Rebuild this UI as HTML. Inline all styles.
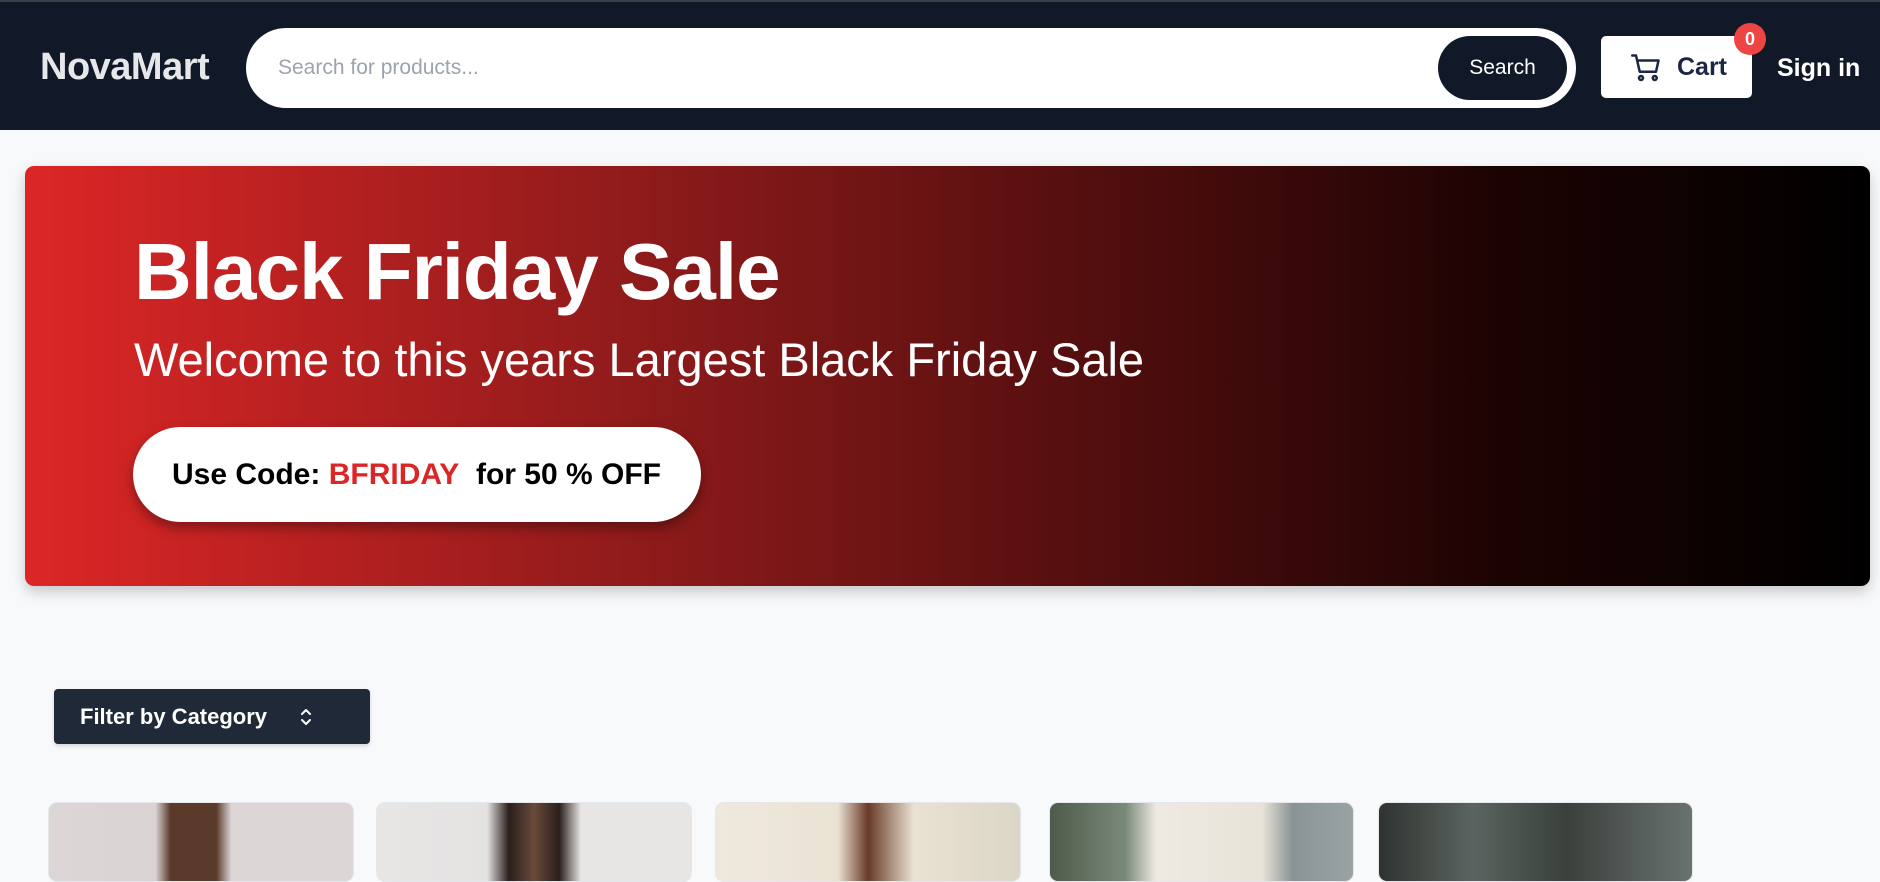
<!DOCTYPE html>
<html><head><meta charset="utf-8"><style>
*{margin:0;padding:0;box-sizing:border-box}
body{width:1880px;height:871px;overflow:hidden;background:#f8f9fb;font-family:"Liberation Sans",sans-serif;position:relative}
.hdr{position:absolute;left:0;top:0;width:1880px;height:130px;background:#111827;border-top:2px solid #3a3f47}
.logo{position:absolute;left:40px;top:44px;font-size:38px;font-weight:bold;color:#e5e7eb;letter-spacing:-0.5px}
.search{position:absolute;left:246px;top:26px;width:1330px;height:80px;background:#fff;border-radius:40px}
.ph{position:absolute;left:32px;top:28px;font-size:21px;color:#9ca3af}
.sbtn{position:absolute;left:1192px;top:8px;width:129px;height:64px;background:#111827;border-radius:32px;color:#fff;font-size:21px;text-align:center;line-height:64px}
.cart{position:absolute;left:1601px;top:34px;width:151px;height:62px;background:#fff;border-radius:5px}
.cart span{position:absolute;left:76px;top:17px;font-size:25px;font-weight:bold;color:#1b2545}
.badge{position:absolute;left:1734px;top:21px;width:32px;height:32px;border-radius:50%;background:#ef4444;color:#fff;font-weight:bold;font-size:18px;text-align:center;line-height:32px}
.sign{position:absolute;left:1777px;top:52px;font-size:25px;font-weight:bold;color:#fff}
.banner{position:absolute;left:25px;top:166px;width:1845px;height:420px;border-radius:9px;background:linear-gradient(90deg,#dc2626 0%,#8b1a1a 35%,#4e0d0d 60%,#1c0303 80%,#000 100%);box-shadow:0 6px 14px rgba(0,0,0,.2)}
.t1{position:absolute;left:109px;top:60px;font-size:80px;font-weight:bold;color:#fff;letter-spacing:-1px}
.t2{position:absolute;left:109px;top:166px;font-size:47px;color:#fff}
.pill{position:absolute;left:108px;top:261px;width:568px;height:95px;border-radius:48px;background:#fff;box-shadow:0 6px 12px rgba(0,0,0,.35);font-size:30px;font-weight:bold;color:#000;padding-left:39px;line-height:95px}
.pill b{color:#dc2626}
.filter{position:absolute;left:54px;top:689px;width:316px;height:55px;background:#1f2937;border-radius:4px;color:#fff;font-weight:bold;font-size:22px;padding-left:26px;line-height:55px;box-shadow:0 2px 4px rgba(0,0,0,.15)}
.card{position:absolute;top:802px;height:80px;border-radius:9px;overflow:hidden;border:1px solid #e5e7eb}
</style></head><body>
<div class="hdr">
<div class="logo">NovaMart</div>
<div class="search"><div class="ph">Search for products...</div><div class="sbtn">Search</div></div>
<div class="cart"><svg style="position:absolute;left:30px;top:17px" width="30" height="30" viewBox="0 0 24 24" fill="none" stroke="#1b2545" stroke-width="2" stroke-linecap="round" stroke-linejoin="round"><path d="M1 2h3l3 13h13l2-9H5.5"/><circle cx="8" cy="20" r="1.6"/><circle cx="19" cy="20" r="1.6"/></svg><span>Cart</span></div>
<div class="badge">0</div>
<div class="sign">Sign in</div>
</div>
<div class="banner">
<div class="t1">Black Friday Sale</div>
<div class="t2">Welcome to this years Largest Black Friday Sale</div>
<div class="pill">Use Code: <b>BFRIDAY</b>&nbsp; for 50 % OFF</div>
</div>
<div class="filter">Filter by Category<svg style="position:absolute;left:243px;top:16px" width="18" height="24" viewBox="0 0 18 24" fill="none" stroke="#fff" stroke-width="2" stroke-linecap="round" stroke-linejoin="round"><path d="M5 9l4-4 4 4M5 15l4 4 4-4"/></svg></div>
<div class="card" style="left:48px;width:306px;background:linear-gradient(90deg,#dcd6d6 0%,#d9d3d3 35%,#5a3a2a 40%,#5a3a2a 55%,#dcd6d6 60%)"></div>
<div class="card" style="left:376px;width:316px;background:linear-gradient(90deg,#e8e6e5 0%,#e5e3e2 35%,#2a1f1c 42%,#6a4a3a 50%,#2a1f1c 58%,#e8e6e5 65%)"></div>
<div class="card" style="left:715px;width:306px;background:linear-gradient(90deg,#efe9dd 0%,#eae3d4 40%,#6a3a28 50%,#e9e2d2 65%,#dcd6c8 100%)"></div>
<div class="card" style="left:1049px;width:305px;background:linear-gradient(90deg,#4e5a4a 0%,#7a8a7a 25%,#eeeae3 35%,#e8e3d8 70%,#8a9496 80%,#9aa2a4 100%)"></div>
<div class="card" style="left:1378px;width:315px;background:linear-gradient(90deg,#2e3330 0%,#5b6460 30%,#3a403c 60%,#6a7270 100%)"></div>
</body></html>
